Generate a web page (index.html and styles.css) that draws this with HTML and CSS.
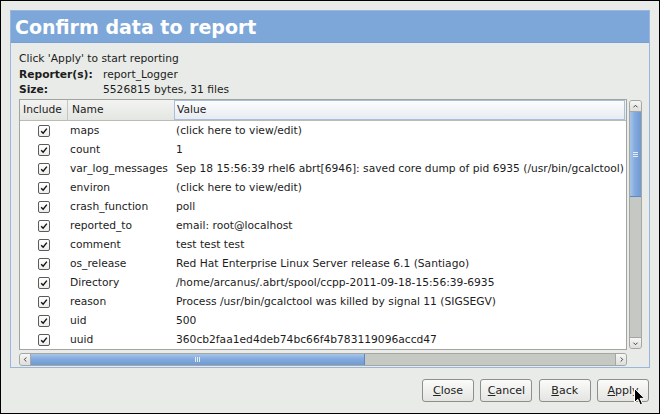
FILE: index.html
```html
<!DOCTYPE html>
<html>
<head>
<meta charset="utf-8">
<link rel="stylesheet" href="styles.css">
</head>
<body>
<div class="window">
  <div class="panel">
    <div class="panel-header">Confirm data to report</div>
    <div class="panel-body">
      <div class="intro">Click 'Apply' to start reporting</div>
      <div class="meta">
        <span class="label">Reporter(s):</span><span>report_Logger</span>
        <span class="label">Size:</span><span>5526815 bytes, 31 files</span>
      </div>
      <div class="scrolled">
        <div class="tree">
          <div class="tree-head">
            <div class="th th-first">Include</div>
            <div class="th">Name</div>
            <div class="th th-sorted">Value</div>
          </div>
          <div class="tree-rows">
            <div class="row"><span class="cell-check"><span class="check"><svg viewBox="0 0 12 12"><path d="M2.6 6.2 L5 8.6 L9.4 3.2"/></svg></span></span><span class="cell">maps</span><span class="cell">(click here to view/edit)</span></div>
            <div class="row"><span class="cell-check"><span class="check"><svg viewBox="0 0 12 12"><path d="M2.6 6.2 L5 8.6 L9.4 3.2"/></svg></span></span><span class="cell">count</span><span class="cell">1</span></div>
            <div class="row"><span class="cell-check"><span class="check"><svg viewBox="0 0 12 12"><path d="M2.6 6.2 L5 8.6 L9.4 3.2"/></svg></span></span><span class="cell">var_log_messages</span><span class="cell">Sep 18 15:56:39 rhel6 abrt[6946]: saved core dump of pid 6935 (/usr/bin/gcalctool)</span></div>
            <div class="row"><span class="cell-check"><span class="check"><svg viewBox="0 0 12 12"><path d="M2.6 6.2 L5 8.6 L9.4 3.2"/></svg></span></span><span class="cell">environ</span><span class="cell">(click here to view/edit)</span></div>
            <div class="row"><span class="cell-check"><span class="check"><svg viewBox="0 0 12 12"><path d="M2.6 6.2 L5 8.6 L9.4 3.2"/></svg></span></span><span class="cell">crash_function</span><span class="cell">poll</span></div>
            <div class="row"><span class="cell-check"><span class="check"><svg viewBox="0 0 12 12"><path d="M2.6 6.2 L5 8.6 L9.4 3.2"/></svg></span></span><span class="cell">reported_to</span><span class="cell">email: root@localhost</span></div>
            <div class="row"><span class="cell-check"><span class="check"><svg viewBox="0 0 12 12"><path d="M2.6 6.2 L5 8.6 L9.4 3.2"/></svg></span></span><span class="cell">comment</span><span class="cell">test test test</span></div>
            <div class="row"><span class="cell-check"><span class="check"><svg viewBox="0 0 12 12"><path d="M2.6 6.2 L5 8.6 L9.4 3.2"/></svg></span></span><span class="cell">os_release</span><span class="cell">Red Hat Enterprise Linux Server release 6.1 (Santiago)</span></div>
            <div class="row"><span class="cell-check"><span class="check"><svg viewBox="0 0 12 12"><path d="M2.6 6.2 L5 8.6 L9.4 3.2"/></svg></span></span><span class="cell">Directory</span><span class="cell">/home/arcanus/.abrt/spool/ccpp-2011-09-18-15:56:39-6935</span></div>
            <div class="row"><span class="cell-check"><span class="check"><svg viewBox="0 0 12 12"><path d="M2.6 6.2 L5 8.6 L9.4 3.2"/></svg></span></span><span class="cell">reason</span><span class="cell">Process /usr/bin/gcalctool was killed by signal 11 (SIGSEGV)</span></div>
            <div class="row"><span class="cell-check"><span class="check"><svg viewBox="0 0 12 12"><path d="M2.6 6.2 L5 8.6 L9.4 3.2"/></svg></span></span><span class="cell">uid</span><span class="cell">500</span></div>
            <div class="row"><span class="cell-check"><span class="check"><svg viewBox="0 0 12 12"><path d="M2.6 6.2 L5 8.6 L9.4 3.2"/></svg></span></span><span class="cell">uuid</span><span class="cell">360cb2faa1ed4deb74bc66f4b783119096accd47</span></div>
          </div>
        </div>
        <div class="vscroll">
          <div class="sb-btn"><svg viewBox="0 0 11 11"><path d="M3 6.5 L5.5 4 L8 6.5"/></svg></div>
          <div class="vthumb"><span class="grip-v"></span></div>
          <div class="sb-track"></div>
          <div class="sb-btn"><svg viewBox="0 0 11 11"><path d="M3 4.5 L5.5 7 L8 4.5"/></svg></div>
        </div>
        <div class="hscroll">
          <div class="sb-btn"><svg viewBox="0 0 11 11"><path d="M6.5 3 L4 5.5 L6.5 8"/></svg></div>
          <div class="hthumb"><span class="grip-h"></span></div>
          <div class="sb-track"></div>
          <div class="sb-btn"><svg viewBox="0 0 11 11"><path d="M4.5 3 L7 5.5 L4.5 8"/></svg></div>
        </div>
      </div>
    </div>
  </div>
  <div class="buttons">
    <div class="btn"><u>C</u>lose</div>
    <div class="btn"><u>C</u>ancel</div>
    <div class="btn"><u>B</u>ack</div>
    <div class="btn"><u>A</u>pply</div>
  </div>
  <svg class="cursor" viewBox="0 0 12 19"><path d="M0.5 0.5 L0.5 14.5 L3.8 11.3 L6.2 16.8 L8.5 15.8 L6.1 10.4 L10.6 10.4 Z"/></svg>
</div>
</body>
</html>
```
FILE: styles.css
```css
* { box-sizing: border-box; }
html, body { margin: 0; padding: 0; }
body {
  font-family: "DejaVu Sans", "Liberation Sans", sans-serif;
  font-size: 10.7px;
  color: #1c1c1c;
  background: #e8ebe7;
}
.window {
  position: relative;
  width: 660px;
  height: 414px;
  border: 1px solid #000;
  background: #e8ebe7;
  padding: 9px 9px 0 9px;
  display: flex;
  flex-direction: column;
  overflow: hidden;
}
.panel {
  height: 358px;
  border: 1px solid #9ab6dd;
  display: flex;
  flex-direction: column;
}
.panel-header {
  height: 32px;
  line-height: 32px;
  background: #7da7d9;
  border-bottom: 1px solid #7aa0d2;
  color: #fff;
  font-weight: bold;
  font-size: 19px;
  padding-left: 4px;
}
.panel-body {
  flex: 1;
  display: flex;
  flex-direction: column;
  padding: 9px 7px 7px 8px;
}
.intro { line-height: 14px; }
.meta {
  display: grid;
  grid-template-columns: 84px auto;
  row-gap: 1px;
  line-height: 14px;
  margin-top: 2px;
}
.label { font-weight: bold; }
.scrolled {
  flex: 1;
  margin-top: 2px;
  display: grid;
  grid-template-columns: 608px 13px;
  grid-template-rows: 1fr 13px;
  column-gap: 2px;
  row-gap: 3px;
}
.tree {
  border: 1px solid #a2a4a0;
  background: #fff;
  overflow: hidden;
  display: flex;
  flex-direction: column;
}
.tree-head {
  display: grid;
  grid-template-columns: 47px 106px 1fr;
  height: 21px;
  background: linear-gradient(#f3f4f2, #e4e6e2);
  border-bottom: 1px solid #b9bbb7;
  flex: none;
}
.th {
  line-height: 20px;
  padding-left: 4px;
  border-left: 1px solid #c4c6c2;
  white-space: nowrap;
}
.th-first { border-left: none; padding-left: 3px; }
.th-sorted {
  border: 1px solid #a9bedb;
  margin: 0 1px 1px 1px;
  line-height: 18px;
  padding-left: 2px;
  background: linear-gradient(#fbfcfd, #e7ecf2);
}
.tree-rows { flex: 1; }
.row {
  display: grid;
  grid-template-columns: 47px 106px 1fr;
  height: 19px;
  line-height: 19px;
  white-space: nowrap;
}
.cell { padding-left: 3px; overflow: hidden; }
.cell-check {
  display: flex;
  align-items: center;
  justify-content: center;
  padding-left: 1px;
}
.check {
  width: 12px;
  height: 12px;
  border: 1px solid #5a5c58;
  border-radius: 2px;
  background: linear-gradient(#ffffff, #eceeea);
  display: flex;
}
.check svg { width: 10px; height: 10px; }
.check path { fill: none; stroke: #111; stroke-width: 1.7; }
.vscroll {
  margin: 1px 0;
  border: 1px solid #a5a7a3;
  border-radius: 3px;
  background: #c6c8c4;
  display: flex;
  flex-direction: column;
  overflow: hidden;
}
.hscroll {
  border: 1px solid #a5a7a3;
  border-radius: 3px;
  background: #c6c8c4;
  display: flex;
  overflow: hidden;
}
.sb-btn {
  flex: none;
  width: 11px;
  height: 11px;
  background: linear-gradient(#f6f6f5, #dedfdc);
  display: flex;
  align-items: center;
  justify-content: center;
}
.vscroll .sb-btn { width: 100%; height: 11px; }
.hscroll .sb-btn { height: 100%; width: 11px; }
.sb-btn svg { width: 9px; height: 9px; }
.sb-btn path { fill: none; stroke: #3b3d39; stroke-width: 1.2; }
.vscroll .sb-btn:first-child { border-bottom: 1px solid #a5a7a3; }
.vscroll .sb-btn:last-child { border-top: 1px solid #a5a7a3; }
.hscroll .sb-btn:first-child { border-right: 1px solid #a5a7a3; }
.hscroll .sb-btn:last-child { border-left: 1px solid #a5a7a3; }
.sb-track { flex: 1; }
.vthumb {
  flex: none;
  height: 85px;
  background: linear-gradient(to right, #a8c5ea, #82aadd 45%, #6f9ad3);
  border-bottom: 1px solid #5d89c3;
  display: flex;
  align-items: center;
  justify-content: center;
}
.hthumb {
  flex: none;
  width: 334px;
  background: linear-gradient(#a8c5ea, #82aadd 45%, #6f9ad3);
  border-right: 1px solid #5d89c3;
  display: flex;
  align-items: center;
  justify-content: center;
}
.grip-v {
  width: 5px;
  height: 5px;
  background: repeating-linear-gradient(#e3ecf7 0 1px, transparent 1px 2px);
}
.grip-h {
  width: 5px;
  height: 5px;
  background: repeating-linear-gradient(to right, #e3ecf7 0 1px, transparent 1px 2px);
}
.buttons {
  display: flex;
  justify-content: flex-end;
  gap: 6.3px;
  margin-top: 11px;
  padding-right: 1px;
}
.btn {
  width: 52px;
  height: 23px;
  border: 1px solid #8d8f8b;
  border-radius: 3px;
  background: linear-gradient(#fbfbfa, #e4e5e2);
  line-height: 21px;
  text-align: center;
  font-size: 11px;
  color: #222;
}
.btn u { text-decoration-thickness: 1px; text-underline-offset: 1px; }
.cursor {
  position: absolute;
  left: 633px;
  top: 387px;
  width: 12px;
  height: 19px;
}
.cursor path { fill: #000; stroke: #fff; stroke-width: 1; }
```
